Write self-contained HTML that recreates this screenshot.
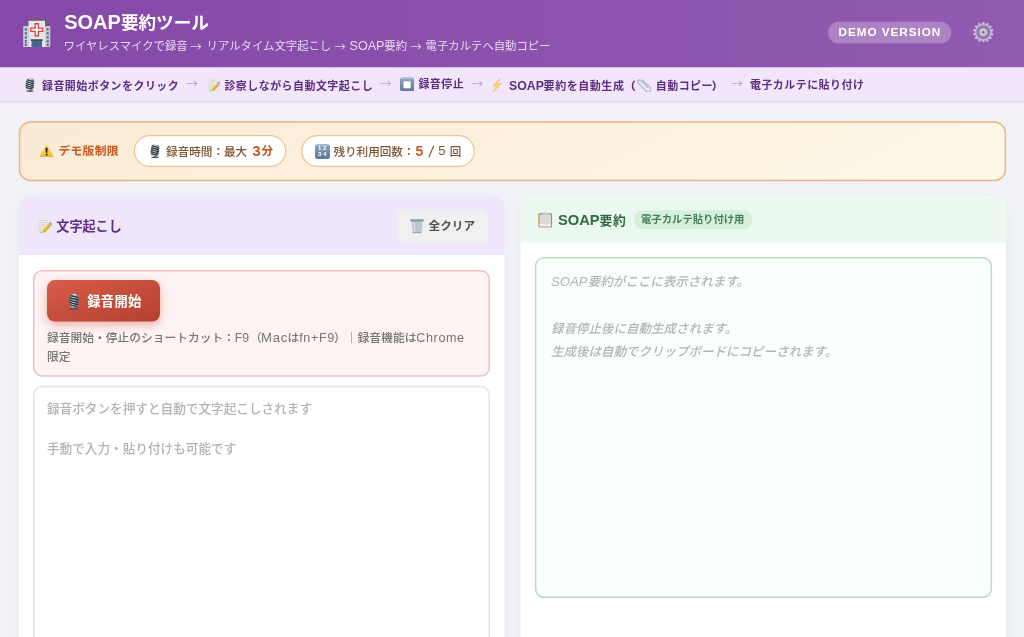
<!DOCTYPE html>
<html lang="ja">
<head>
<meta charset="utf-8">
<title>SOAP要約ツール</title>
<style>
*{box-sizing:border-box;margin:0;padding:0}
html,body{width:1024px;height:637px;overflow:hidden}
body{background:#f0f2f8;font-family:"Liberation Sans","Noto Sans CJK JP",sans-serif;color:#333;position:relative}
.abs{position:absolute}
.t{position:absolute;white-space:nowrap;line-height:20px}
.l{font-size:1.125em}
.title{left:64.2px;top:12.4px;font-size:17.6px;font-weight:700;color:#fff}
.sub{top:36px;font-size:11.37px;color:#e6d8f0}
.st{top:75.8px;font-size:10.95px;letter-spacing:.5px;font-weight:700;color:#5e2d82}
.pt{top:141.5px;font-size:11.6px;color:#7d5533;font-weight:500}
.or{color:#c6571f;font-weight:700}
.ar1{top:35.5px;font-size:11.2px;color:#e6d8f0;font-family:"Noto Sans CJK JP",sans-serif}
.ar2{top:73.2px;font-size:11.8px;color:#b79acf;font-family:"Noto Sans CJK JP",sans-serif}
.hn{top:328px;font-size:11.7px;color:#757575;font-weight:500}
</style>
</head>
<body>
<div id="root" style="position:absolute;left:0;top:0;width:1024px;height:637px;will-change:transform">

<svg width="0" height="0" style="position:absolute">
<defs>
<linearGradient id="gMic" x1="0" y1="0" x2="1" y2="0"><stop offset="0" stop-color="#6f7982"/><stop offset=".45" stop-color="#d3dbe3"/><stop offset="1" stop-color="#626b74"/></linearGradient>
<linearGradient id="gBlue" x1="0" y1="0" x2="0" y2="1"><stop offset="0" stop-color="#9bb4cc"/><stop offset=".15" stop-color="#839fbd"/><stop offset="1" stop-color="#5f7791"/></linearGradient>
<linearGradient id="gWarn" x1="0" y1="0" x2="0" y2="1"><stop offset="0" stop-color="#f9dc55"/><stop offset="1" stop-color="#efbc2f"/></linearGradient>
<linearGradient id="gBolt" x1="0" y1="0" x2="1" y2="1"><stop offset="0" stop-color="#f6b63a"/><stop offset=".5" stop-color="#f9de6a"/><stop offset="1" stop-color="#f2a52c"/></linearGradient>
<linearGradient id="gPencil" x1="0" y1="0" x2="1" y2="1"><stop offset="0" stop-color="#f3cf45"/><stop offset="1" stop-color="#dca823"/></linearGradient>
<radialGradient id="gGear" cx=".5" cy=".5" r=".5"><stop offset="0" stop-color="#d9cfe4"/><stop offset=".28" stop-color="#d4c9e0"/><stop offset=".36" stop-color="#9486a8"/><stop offset=".62" stop-color="#a497b7"/><stop offset=".68" stop-color="#cfc4dc"/><stop offset="1" stop-color="#cbbfd9"/></radialGradient>
<symbol id="mic" viewBox="0 0 20 28">
 <ellipse cx="10" cy="26.2" rx="8" ry="1.6" fill="#4b535c"/>
 <rect x="8" y="22" width="4.4" height="4" fill="#59626b"/>
 <g transform="rotate(7 10 12)">
  <rect x="1.6" y="0.6" width="16.4" height="23.4" rx="7.6" fill="url(#gMic)"/>
  <g stroke="#252d35" stroke-width="2.1" stroke-linecap="round">
   <path d="M4.5 4.4 L15 6"/><path d="M3 8.2 L16.6 10.2"/><path d="M3 12.2 L16.6 14.2"/><path d="M3 16.2 L16.6 18.2"/><path d="M4.5 20 L15 21.6"/>
  </g>
 </g>
</symbol>
<symbol id="memo" viewBox="0 0 30 32">
 <rect x="0.4" y="0.4" width="26.8" height="31.2" rx="1" fill="#ececee" stroke="#dcdbe0" stroke-width=".8"/>
 <g stroke="#bdbcc3" stroke-width="1.2" stroke-dasharray="5 1.2 8 1.5 3 1"><path d="M3.5 5H23.5M3.5 9.5H23.5M3.5 14H23.5M3.5 18.5H23.5M3.5 23H23.5M3.5 27.5H23.5"/></g>
 <g transform="translate(8 30.2) rotate(-43.9)">
  <path d="M0 0 L5.5 -3.3 L5.5 3.3Z" fill="#e6c9a0"/>
  <path d="M0 0 L2 -1.2 L2 1.2Z" fill="#444"/>
  <rect x="5.5" y="-3.3" width="17" height="6.6" fill="url(#gPencil)"/>
  <rect x="5.5" y="-3.3" width="17" height="2" fill="#f7dc6a"/>
  <rect x="5.5" y="1.6" width="17" height="1.7" fill="#cf9a1c"/>
  <rect x="22.5" y="-3.3" width="2.2" height="6.6" fill="#b4b8c0"/>
  <rect x="24.7" y="-3.3" width="4.6" height="6.6" rx="1.6" fill="#ef8d95"/>
 </g>
</symbol>
<symbol id="stop" viewBox="0 0 29 29">
 <rect x="0" y="0" width="29" height="29" rx="5.5" fill="url(#gBlue)"/>
 <rect x="1.2" y="1.2" width="26.6" height="3" rx="2" fill="#c2d3e2" opacity=".55"/>
 <rect x="7" y="8.5" width="14.5" height="14" rx="0.8" fill="#fff"/>
</symbol>
<symbol id="bolt" viewBox="0 0 20 29">
 <path d="M16 0.5 L1.5 16.5 L9 15.5 L2.5 28.5 L19.5 10.5 L11 12 Z" fill="url(#gBolt)" stroke="#f0a63a" stroke-width=".8" stroke-linejoin="round"/>
</symbol>
<symbol id="clip" viewBox="0 0 28 29">
 <g transform="translate(13.2 14.8) rotate(45)" fill="none" stroke-linecap="round">
  <path d="M9,-2.6 L-11,-2.6 A3.7,3.7 0 0 0 -11,4.8 L12,4.8 A5.4,5.4 0 0 0 12,-6 L-9,-6" stroke="#97a4b5" stroke-width="2.1"/>
  <path d="M9,-2.6 L-11,-2.6 A3.7,3.7 0 0 0 -11,4.8 L12,4.8 A5.4,5.4 0 0 0 12,-6 L-9,-6" stroke="#cfd7e0" stroke-width=".8"/>
 </g>
</symbol>
<symbol id="warn" viewBox="0 0 30 26">
 <path d="M15 0.8 L29.2 24.2 Q29.6 25.4 28.4 25.4 L1.6 25.4 Q0.4 25.4 0.8 24.2 Z" fill="url(#gWarn)"/>
 <path d="M12.9 7 h4.2 l-0.8 10.6 h-2.6 z" fill="#222"/>
 <rect x="13.2" y="19" width="3.6" height="3.2" rx=".8" fill="#222"/>
</symbol>
<symbol id="trash" viewBox="0 0 28 29">
 <path d="M2.2 3 L5 27 Q5.3 28.6 7 28.6 L21 28.6 Q22.7 28.6 23 27 L25.8 3 Z" fill="#cdd1d7"/>
 <g stroke="#a9b0ba" stroke-width="1"><path d="M6 5 L20 27M10 4 L23 24M15 4 L24.5 18M4.5 10 L14 27M22 5 L8 27M18 4 L5 24M13 4 L3.8 17M24 10 L14 27"/></g>
 <path d="M8 5 L9.5 27" stroke="#e6e9ed" stroke-width="1.6"/>
 <rect x="0.6" y="0.4" width="26.8" height="4.6" rx="1.6" fill="#7f8fa2"/>
 <rect x="1.6" y="1" width="24.8" height="1.4" rx=".7" fill="#a9b7c8"/>
 <rect x="5" y="25.4" width="18" height="3.2" rx="1.2" fill="#98a8bb"/>
</symbol>
<symbol id="clipb" viewBox="0 0 29 32">
 <rect x="0.5" y="2.5" width="28" height="29" rx="2.4" fill="#b18253"/>
 <rect x="2.6" y="4.8" width="23.8" height="24.6" rx=".8" fill="#d9d9d9"/>
 <rect x="2.6" y="24.4" width="23.8" height="5" fill="#ededed"/>
 <rect x="9" y="1.2" width="11" height="4.4" rx="1.6" fill="#bcc3cc"/>
 <circle cx="14.5" cy="1.8" r="1.7" fill="#d0d6dd"/>
</symbol>
<symbol id="num" viewBox="0 0 30 30">
 <rect x="0" y="0" width="30" height="30" rx="5" fill="url(#gBlue)"/>
 <rect x="1.5" y="1.2" width="27" height="3" rx="2" fill="#c2d3e2" opacity=".5"/>
</symbol>
<symbol id="gear" viewBox="-21 -21 42 42">
 <g fill="#cdc3da">
  <g id="tooth"><path d="M-3.4 -15 L-2 -20.8 L2 -20.8 L3.4 -15Z"/></g>
  <use href="#tooth" transform="rotate(25.714)"/><use href="#tooth" transform="rotate(51.429)"/><use href="#tooth" transform="rotate(77.143)"/><use href="#tooth" transform="rotate(102.857)"/><use href="#tooth" transform="rotate(128.571)"/><use href="#tooth" transform="rotate(154.286)"/><use href="#tooth" transform="rotate(180.000)"/><use href="#tooth" transform="rotate(205.714)"/><use href="#tooth" transform="rotate(231.429)"/><use href="#tooth" transform="rotate(257.143)"/><use href="#tooth" transform="rotate(282.857)"/><use href="#tooth" transform="rotate(308.571)"/><use href="#tooth" transform="rotate(334.286)"/>
 </g>
 <circle r="16.6" fill="#c9bed7"/>
 <circle r="14.4" fill="#9689aa"/>
 <circle r="11.5" fill="none" stroke="#8a7d9f" stroke-width="2.5"/>
 <circle r="7.6" fill="#d9d0e3"/>
 <circle r="4.8" fill="#c4b8d2"/>
 <circle r="2" fill="#6f5590"/>
</symbol>
</defs>
</svg>

<!-- shadows -->
<div class="abs" style="left:19px;top:197px;width:485px;height:460px;border-radius:12px;box-shadow:0 1px 8px rgba(60,60,110,.04)"></div>
<div class="abs" style="left:521px;top:197px;width:485px;height:460px;border-radius:12px;box-shadow:0 1px 8px rgba(60,60,110,.04)"></div>
<!-- boxes -->
<svg class="abs" style="left:0;top:0" width="1024" height="637" viewBox="0 0 1024 637">
<defs>
<linearGradient id="gHdr" x1="0" y1="0" x2="1" y2="0"><stop offset="0" stop-color="#8549a9"/><stop offset="1" stop-color="#925ab0"/></linearGradient>
<linearGradient id="gBan" x1="0" y1="0" x2="1" y2="0.12"><stop offset="0" stop-color="#fbead5"/><stop offset="1" stop-color="#fef7e6"/></linearGradient>
<linearGradient id="gRec" x1="0" y1="0" x2="1" y2="1"><stop offset="0" stop-color="#d65c48"/><stop offset="1" stop-color="#b3402d"/></linearGradient>
<filter id="fRec" x="-20%" y="-40%" width="140%" height="200%"><feGaussianBlur stdDeviation="4.2"/></filter>
</defs>
<rect x="0" y="0" width="1024" height="67.5" fill="url(#gHdr)"/>
<rect x="0" y="67.5" width="1024" height="34.6" fill="#f1e6fa"/>
<rect x="0" y="101.2" width="1024" height="1" fill="#dccbeb"/>
<rect x="828.1" y="21.7" width="123.1" height="21.9" rx="10.95" fill="#fff" fill-opacity=".26"/>
<rect x="19.5" y="122" width="985.9" height="58.6" rx="11.2" fill="url(#gBan)" stroke="#eab587" stroke-width="1.5"/>
<rect x="134.35" y="135.6" width="151.3" height="30.8" rx="15.4" fill="#fff" stroke="#f0c193" stroke-width="1.2"/>
<rect x="301.85" y="135.6" width="172.4" height="30.8" rx="15.4" fill="#fff" stroke="#f0c193" stroke-width="1.2"/>
<path d="M18.75 640 L18.75 208.5 Q18.75 196.5 30.75 196.5 L492.5 196.5 Q504.5 196.5 504.5 208.5 L504.5 640Z" fill="#fff"/>
<path d="M18.75 255.1 L18.75 208.5 Q18.75 196.5 30.75 196.5 L492.5 196.5 Q504.5 196.5 504.5 208.5 L504.5 255.1Z" fill="#f0e6fb"/>
<path d="M520.6 640 L520.6 208.5 Q520.6 196.5 532.6 196.5 L993.9 196.5 Q1005.9 196.5 1005.9 208.5 L1005.9 640Z" fill="#fff"/>
<path d="M520.6 242.6 L520.6 208.5 Q520.6 196.5 532.6 196.5 L993.9 196.5 Q1005.9 196.5 1005.9 208.5 L1005.9 242.6Z" fill="#ebf8ef"/>
<rect x="397" y="209" width="91" height="34" rx="8" fill="#f0f0f0"/>
<rect x="33.75" y="270.7" width="455.5" height="105.2" rx="8.5" fill="#fef3f3" stroke="#f0c0c0" stroke-width="1.5"/>
<rect x="47" y="283.5" width="113" height="41" rx="8" fill="#c8483a" fill-opacity=".42" filter="url(#fRec)"/>
<rect x="47" y="280.1" width="113" height="41.5" rx="8" fill="url(#gRec)"/>
<rect x="33.75" y="386.5" width="455.5" height="300" rx="8.5" fill="#fff" stroke="#e4e4e8" stroke-width="1.5"/>
<rect x="633.75" y="210.2" width="118.8" height="18.8" rx="9.4" fill="#d6f0dd"/>
<rect x="535.6" y="257.75" width="455.75" height="339.6" rx="8.5" fill="#f9fffc" stroke="#b5dfc0" stroke-width="1.5"/>
</svg>
<!-- header -->
<div class="t title"><span style="font-size:20px">SOAP</span>要約ツール</div>
<div class="t sub" style="left:63.6px">ワイヤレスマイクで録音</div>
<div class="t sub" style="left:206.6px">リアルタイム文字起こし</div>
<div class="t sub" style="left:349.5px"><span style="font-size:12.6px">SOAP</span></div>
<div class="t sub" style="left:384.3px">要約</div>
<div class="t sub" style="left:425.6px">電子カルテへ自動コピー</div>
<div class="t" style="left:838.5px;top:22px;font-size:11.75px;font-weight:700;color:#fff;letter-spacing:.95px">DEMO VERSION</div>

<!-- steps -->
<div class="t st" style="left:42px">録音開始ボタンをクリック</div>
<div class="t st" style="left:224.4px">診察しながら自動文字起こし</div>
<div class="t st" style="left:418.4px;top:74.4px">録音停止</div>
<div class="t st" style="left:509px;letter-spacing:0"><span style="font-size:12.3px">SOAP</span></div>
<div class="t st" style="left:543.6px;font-size:11px;letter-spacing:.55px">要約を自動生成</div>
<div class="t st" style="left:624.7px;font-weight:900">（</div>
<div class="t st" style="left:655.8px">自動コピー</div>
<div class="t st" style="left:711.8px;font-weight:900">）</div>
<div class="t st" style="left:750px;top:74.6px">電子カルテに貼り付け</div>

<!-- banner -->
<div class="t or" style="left:58.5px;top:141.3px;font-size:11.8px;letter-spacing:.25px">デモ版制限</div>
<div class="t pt" style="left:166px">録音時間：最大</div>
<div class="t or" style="left:252.4px;top:140.7px;font-size:14.5px">3</div>
<div class="t or" style="left:261.3px;top:141.3px;font-size:11.8px">分</div>
<div class="t pt" style="left:333.4px">残り利用回数：</div>
<div class="t pt or" style="left:415.5px;top:140.9px;font-size:14px;font-weight:700">5</div>
<div class="t pt" style="left:428.6px;top:141.6px;font-size:15.5px;transform:skewX(-9deg)">/</div>
<div class="t pt" style="left:438.3px;top:141px"><span class="l">5</span></div>
<div class="t pt" style="left:449.7px">回</div>

<!-- left panel -->
<div class="t" style="left:56.3px;top:216.6px;font-size:13.1px;font-weight:700;color:#5e2d82">文字起こし</div>
<div class="t" style="left:428.5px;top:216.2px;font-size:11.65px;font-weight:700;color:#525252">全クリア</div>
<div class="t" style="left:87.2px;top:292px;font-size:13.3px;letter-spacing:.3px;font-weight:700;color:#fff">録音開始</div>
<div class="t hn" style="left:47.1px;font-size:11.74px">録音開始・停止のショートカット：</div>
<div class="t hn" style="left:234.7px;font-size:12.3px">F9</div>
<div class="t hn" style="left:250.1px">（</div>
<div class="t hn" style="left:261px;font-size:13.2px;letter-spacing:.7px">Mac</div>
<div class="t hn" style="left:287.5px">は</div>
<div class="t hn" style="left:299.2px;font-size:12.6px;letter-spacing:.64px">fn+F9</div>
<div class="t hn" style="left:334px">）</div>
<div class="t hn" style="left:345.4px">｜</div>
<div class="t hn" style="left:357.5px;font-size:11.8px">録音機能は</div>
<div class="t hn" style="left:416.3px;font-size:12.6px;letter-spacing:.6px">Chrome</div>
<div class="t hn" style="left:47.1px;top:347.4px">限定</div>
<div class="t" style="left:47px;top:398.7px;font-size:12.64px;color:#b3b3b3;font-weight:500;line-height:20.2px">録音ボタンを押すと自動で文字起こしされます<br><br>手動で入力・貼り付けも可能です</div>

<!-- right panel -->
<div class="t" style="left:558px;top:210.3px;font-size:14.7px;font-weight:700;color:#2e6b3e">SOAP</div>
<div class="t" style="left:599.6px;top:210.7px;font-size:12.8px;letter-spacing:.5px;font-weight:700;color:#2e6b3e">要約</div>
<div class="t" style="left:641px;top:209.8px;font-size:10.35px;font-weight:700;color:#43805a">電子カルテ貼り付け用</div>
<div class="t" style="left:551px;top:270.4px;font-size:12.5px;font-style:italic;font-weight:500;color:#b4b4b4;line-height:23.1px"><span style="font-size:13.2px">SOAP</span>要約がここに表示されます。<br><br>録音停止後に自動生成されます。<br>生成後は自動でクリップボードにコピーされます。</div>

<!-- icons -->
<svg class="abs" style="left:23px;top:18.5px" width="27.5" height="28.8" viewBox="0 0 55 57.6">
 <rect x="0.5" y="12.5" width="11" height="44" fill="#d2d3d3"/>
 <rect x="43.5" y="12.5" width="11" height="44" fill="#cbcccc"/>
 <rect x="0" y="11.5" width="11.5" height="2.6" fill="#66605f"/>
 <rect x="43.5" y="11.5" width="11.5" height="2.6" fill="#66605f"/>
 <g fill="#4f7896"><rect x="3.6" y="18" width="4" height="5.4"/><rect x="3.6" y="26" width="4" height="5.4"/><rect x="3.6" y="34" width="4" height="5.4"/><rect x="3.6" y="42" width="4" height="5.4"/><rect x="3.6" y="49" width="4" height="5"/>
 <rect x="47.4" y="18" width="4" height="5.4"/><rect x="47.4" y="26" width="4" height="5.4"/><rect x="47.4" y="34" width="4" height="5.4"/><rect x="47.4" y="42" width="4" height="5.4"/><rect x="47.4" y="49" width="4" height="5"/></g>
 <rect x="11" y="1.5" width="33" height="55" fill="#e6e6e6"/>
 <rect x="10" y="0.5" width="35" height="3" fill="#5c5857"/>
 <path d="M24.2 9.5 h6.6 v8.7 h8.7 v6.6 h-8.7 v8.7 h-6.6 v-8.7 h-8.7 v-6.6 h8.7z" fill="#f6f1f1" stroke="#d5484d" stroke-width="2.6"/>
 <rect x="15.5" y="40.5" width="24" height="3.4" fill="#4a4646"/>
 <rect x="17" y="43.9" width="21" height="12.6" fill="#3f6e90"/>
 <path d="M24 43.9V56.5M31 43.9V56.5" stroke="#2f5876" stroke-width="1"/>
</svg>
<svg class="abs" style="left:973.2px;top:21.8px;opacity:.92" width="20.6" height="20.6"><use href="#gear"/></svg>

<svg class="abs" style="left:25px;top:78.2px" width="10" height="14"><use href="#mic"/></svg>
<svg class="abs" style="left:206.6px;top:78.2px" width="13.2" height="14.1"><use href="#memo"/></svg>
<svg class="abs" style="left:399.6px;top:76.5px" width="14.3" height="14.6"><use href="#stop"/></svg>
<svg class="abs" style="left:491.9px;top:77.9px" width="10.2" height="14.4"><use href="#bolt"/></svg>
<svg class="abs" style="left:636.8px;top:77.9px" width="14.1" height="14.4"><use href="#clip"/></svg>

<svg class="abs" style="left:38.6px;top:143.7px" width="15.2" height="13.5" preserveAspectRatio="none"><use href="#warn"/></svg>
<svg class="abs" style="left:150px;top:144.3px" width="10.2" height="14.3"><use href="#mic"/></svg>
<svg class="abs" style="left:314.5px;top:143.8px" width="15" height="15"><use href="#num"/></svg>
<div class="t" style="left:318.1px;top:144.8px;font-size:5.9px;line-height:6.5px;font-weight:700;color:#fff;letter-spacing:1.6px">12<br>34</div>

<svg class="abs" style="left:37px;top:218.4px" width="15" height="16"><use href="#memo"/></svg>
<svg class="abs" style="left:410.1px;top:219px" width="14.1" height="14.5"><use href="#trash"/></svg>
<svg class="abs" style="left:67.7px;top:292.8px" width="11.8" height="17.4"><use href="#mic"/></svg>
<svg class="abs" style="left:538px;top:212.3px" width="14.5" height="15.7"><use href="#clipb"/></svg>

<!-- arrows -->
<div class="t ar1" style="left:190.6px">→</div>
<div class="t ar1" style="left:334.6px">→</div>
<div class="t ar1" style="left:410.6px">→</div>
<div class="t ar2" style="left:186.3px">→</div>
<div class="t ar2" style="left:379.8px">→</div>
<div class="t ar2" style="left:471.6px">→</div>
<div class="t ar2" style="left:731.3px">→</div>
</div>
</body>
</html>
